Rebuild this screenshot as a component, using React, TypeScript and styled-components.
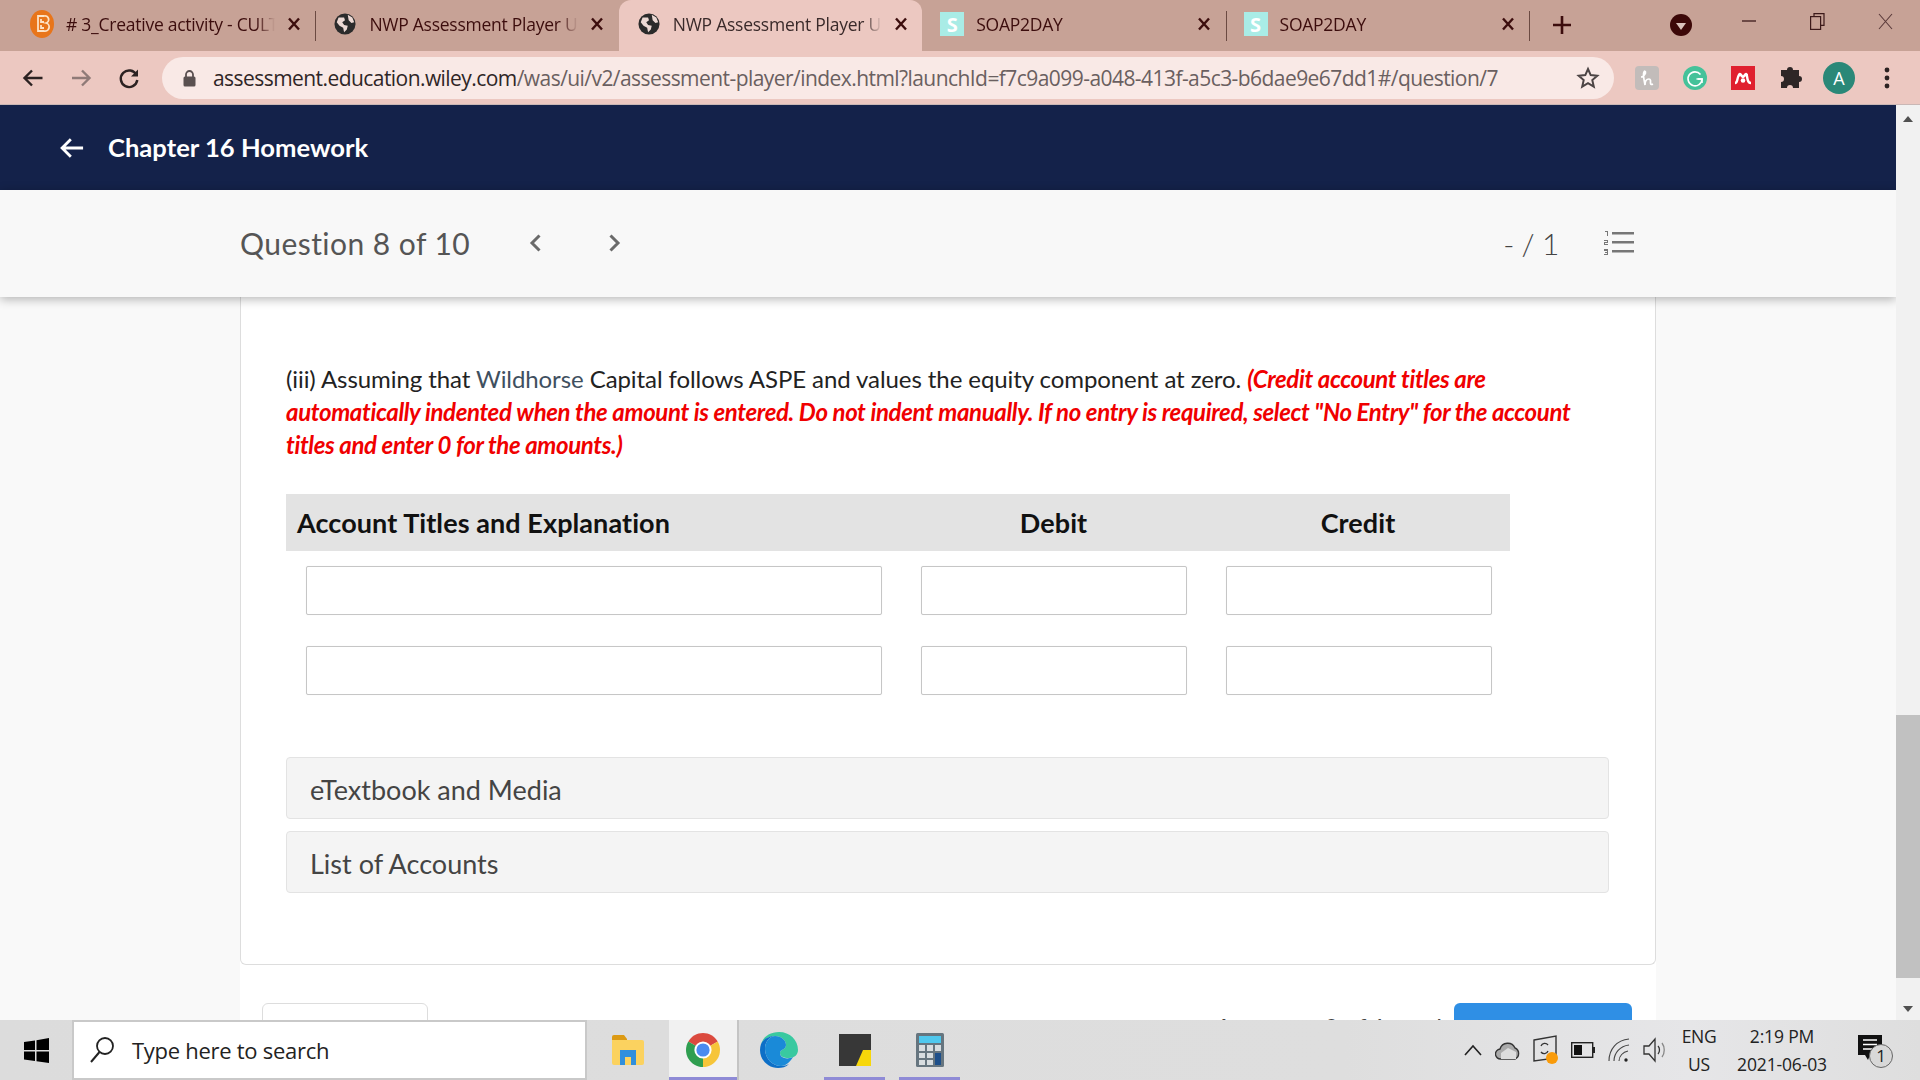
import React from "react";
import styled, { createGlobalStyle } from "styled-components";

const Global = createGlobalStyle`
  html, body { margin: 0; padding: 0; background: #fff; overflow: hidden; }
  * { box-sizing: border-box; }
`;

const Screen = styled.div`
  width: 1920px; height: 1080px; display: flex; flex-direction: column; overflow: hidden;
  font-family: Lato, "Open Sans", sans-serif;
`;

/* ---------- browser chrome ---------- */
const TabStrip = styled.div`
  height: 51px; flex: none; background: #c7a296; display: flex; align-items: stretch; padding-left: 12px; position: relative;
`;
const Tab = styled.div<{ $active?: boolean; $sep?: boolean }>`
  width: 303.4px; flex: none; display: flex; align-items: center; padding: 0 0 3px 18px; position: relative;
  background: ${p => (p.$active ? "#ecc8c1" : "transparent")};
  border-radius: ${p => (p.$active ? "12px 12px 0 0" : "0")};
  color: #3c0d0d;
  &::after {
    content: ""; display: ${p => (p.$sep ? "block" : "none")}; position: absolute; right: -1px; top: 11px; height: 30px; width: 1px; background: #6b4a42;
  }
`;
const FaviconSlot = styled.div`
  width: 24px; height: 24px; flex: none; display: flex; align-items: center; justify-content: center;
`;
const TabTitle = styled.div<{ $active?: boolean }>`
  margin-left: 12px; width: 209px; flex: none; overflow: hidden; white-space: nowrap;
  font: 400 17.5px "Open Sans", sans-serif; letter-spacing: -0.25px;
  color: ${p => (p.$active ? "#3a2a2a" : "#3c0d0d")};
  -webkit-mask-image: linear-gradient(90deg, #000 91%, transparent 100%);
  mask-image: linear-gradient(90deg, #000 91%, transparent 100%);
`;
const TabClose = styled.div`
  width: 16px; margin-left: 11px; flex: none; display: flex; justify-content: center;
`;
const SoapIcon = styled.div`
  width: 24px; height: 24px; background: #a9ece6; color: #fff; font: 700 20px "Open Sans", sans-serif; display: flex; align-items: center; justify-content: center;
`;
const NewTab = styled.div`
  width: 44px; margin-left: 11px; display: flex; align-items: center; justify-content: center; flex: none; padding-bottom: 2px;
`;
const StripSpacer = styled.div`
  flex: 1;
`;
const ProfileMenu = styled.div`
  width: 22px; height: 22px; margin-top: 14px; border-radius: 50%; background: #3c0808; display: flex; align-items: center; justify-content: center; flex: none;
  &::after { content: ""; border-left: 5px solid transparent; border-right: 5px solid transparent; border-top: 7px solid #d9c2bb; margin-top: 2px; }
`;
const WinButtons = styled.div`
  display: flex; width: 215px; margin-left: 13px; flex: none; align-items: flex-start; justify-content: space-between; padding: 13px 27px 0 36px;
`;
const Toolbar = styled.div`
  height: 54px; flex: none; background: #ecc8c1; display: flex; align-items: center; border-bottom: 1px solid #c9b7b5;
`;
const NavIcons = styled.div`
  width: 162px; flex: none; display: flex; align-items: center; gap: 24px; padding-left: 21px;
`;
const Omnibox = styled.div`
  width: 1452px; height: 42px; flex: none; border-radius: 21px; background: #f9e9e6; display: flex; align-items: center; padding: 0 14px 0 20px; position: relative;
`;
const Url = styled.div`
  margin-left: 16px; font: 400 21px "Open Sans", sans-serif; letter-spacing: -0.56px; color: #6a5f60; white-space: nowrap; flex: 1;
  b { font-weight: 400; color: #2f2626; }
`;
const ExtIcons = styled.div`
  flex: none; display: flex; align-items: center; padding-left: 9px;
`;
const ExtSlot = styled.div`
  width: 48px; flex: none; display: flex; align-items: center; justify-content: center;
`;
const Avatar = styled.div`
  width: 32px; height: 32px; background: #2a8878; border-radius: 50%;
  color: #fff; display: flex; align-items: center; justify-content: center; font: 400 18px "Open Sans", sans-serif; flex: none;
`;

/* ---------- page ---------- */
const Viewport = styled.div`
  flex: 1; min-height: 0; display: flex; overflow: hidden;
`;
const Page = styled.div`
  flex: 1; min-width: 0; display: flex; flex-direction: column; background: #f9f9f9; overflow: hidden;
`;
const Scrollbar = styled.div`
  width: 24px; flex: none; background: #f1f1f1; display: flex; flex-direction: column; align-items: stretch; padding-top: 610px; position: relative;
`;
const Thumb = styled.div`
  height: 263px; background: #c1c1c1;
`;
const ScrollArrow = styled.div<{ $down?: boolean }>`
  position: absolute; left: 7px; ${p => (p.$down ? "bottom: 8px;" : "top: 11px;")}
  border-left: 5px solid transparent; border-right: 5px solid transparent;
  ${p => (p.$down ? "border-top: 6px solid #505050;" : "border-bottom: 6px solid #505050;")}
`;
const TopBar = styled.div`
  height: 85px; flex: none; background: #14224a; color: #fff; display: flex; align-items: center; padding-left: 58px; gap: 22px;
`;
const TopTitle = styled.div`
  font: 700 25.6px Lato, sans-serif; padding-bottom: 1px;
`;
const SubBar = styled.div`
  height: 107px; flex: none; background: #f8f8f8; box-shadow: 0 2px 10px rgba(0,0,0,.3); position: relative; z-index: 2;
  display: flex; align-items: center; padding: 0 262px 2px 240px; color: #555;
`;
const QuestionLabel = styled.div`
  font: 400 30px Lato, sans-serif; width: 289px; letter-spacing: .45px; flex: none;
`;
const Chevrons = styled.div`
  display: flex; gap: 64px; align-items: center;
`;
const Score = styled.div`
  margin-left: auto; font: 300 30px Lato, sans-serif; color: #444; margin-right: 45px; letter-spacing: -.4px;
`;
const Column = styled.div`
  margin: 0 240px; background: #fff; flex: 1; min-height: 0; display: flex; flex-direction: column;
`;
const Card = styled.div`
  border: 1px solid #ddd; border-top: none; border-radius: 0 0 6px 6px; height: 668px; flex: none; padding: 0 45px 0 45px;
`;
const Prompt = styled.p`
  margin: 65px 0 0; font: 400 24px/33px Lato, sans-serif; color: #222; letter-spacing: -0.08px; width: 1300px;
`;
const Company = styled.span`
  color: #3f5060;
`;
const Warning = styled.em`
  color: #f00000; font-weight: 700; font-style: italic; letter-spacing: -0.36px;
`;
const JournalTable = styled.div`
  margin-top: 33px; width: 1224px;
`;
const TableHead = styled.div`
  height: 57px; background: #e3e3e3; display: grid; grid-template-columns: 615px 305px 304px; align-items: center;
  font: 700 27px Lato, sans-serif; color: #111; letter-spacing: .08px;
`;
const HeadCell = styled.div<{ $center?: boolean }>`
  text-align: ${p => (p.$center ? "center" : "left")}; padding-left: ${p => (p.$center ? "0" : "11px")};
`;
const TableRow = styled.div`
  display: grid; grid-template-columns: 576px 266px 266px; column-gap: 39px; padding-left: 20px; margin-top: 15px;
  & + & { margin-top: 31px; }
`;
const Field = styled.div`
  height: 49px; border: 1px solid #c6c6c6; border-radius: 2px; background: #fff; box-shadow: 0 0 1px rgba(0,0,0,.1);
`;
const Accordion = styled.div<{ $first?: boolean }>`
  margin-top: ${p => (p.$first ? "62px" : "12px")}; height: 62px; width: 1323px; background: #f4f4f4; border: 1px solid #e3e3e3; border-radius: 4px;
  display: flex; align-items: center; padding: 2px 0 0 23px; font: 400 27px Lato, sans-serif; color: #444;
`;
const Footer = styled.div`
  display: flex; align-items: flex-start; padding: 38px 24px 0 22px; flex: 1; min-height: 0;
`;
const GhostButton = styled.div`
  width: 166px; height: 50px; border: 1px solid #ddd; border-radius: 6px;
`;
const FooterNote = styled.div`
  margin-left: auto; margin-right: 12px; margin-top: 9px; font: 400 24px Lato, sans-serif; color: #444; white-space: nowrap;
`;
const PrimaryButton = styled.div`
  width: 178px; height: 50px; background: #2f8fe5; border-radius: 6px;
`;

/* ---------- taskbar ---------- */
const Taskbar = styled.div`
  height: 60px; flex: none; background: linear-gradient(90deg, #dcdcdc, #dedede 70%, #e6e6e8 88%, #dedede); display: flex; align-items: stretch; position: relative;
`;
const StartSlot = styled.div`
  width: 72px; flex: none; display: flex; align-items: center; justify-content: center;
`;
const SearchBox = styled.div`
  width: 515px; flex: none; background: #fff; border: 2px solid #c9c9c9; display: flex; align-items: center; padding-left: 14px;
  font: 400 22px "Open Sans", sans-serif; color: #222; letter-spacing: -0.28px; gap: 16px;
`;
const AppSlot = styled.div<{ $w: number; $bar?: boolean; $lit?: boolean; $gap?: number }>`
  width: ${p => p.$w}px; flex: none; display: flex; align-items: center; justify-content: center; position: relative;
  margin-left: ${p => p.$gap ?? 0}px;
  background: ${p => (p.$lit ? "#f1f1f1" : "transparent")};
  ${p => (p.$lit ? "border-right: 2px solid #c4c4c4;" : "")}
  &::after {
    content: ""; display: ${p => (p.$bar ? "block" : "none")}; position: absolute; left: 0; right: 0; bottom: 0; height: 3px; background: #8f8bd6;
  }
`;
const Tray = styled.div`
  margin-left: auto; display: flex; align-items: center; height: 100%; padding-right: 36px;
`;
const TrayIcons = styled.div`
  display: flex; align-items: center; gap: 12px; margin-right: 9px;
`;
const Lang = styled.div`
  font: 400 17.5px/28px "Open Sans", sans-serif; color: #222; text-align: center; width: 46px; letter-spacing: -0.3px;
`;
const Clock = styled.div`
  font: 400 17.5px/28px "Open Sans", sans-serif; color: #222; text-align: center; margin-left: 10px; width: 100px; letter-spacing: -0.15px; white-space: nowrap;
`;
const Notify = styled.div`
  margin-left: 26px; position: relative; width: 26px; height: 30px;
`;
const NotifyBadge = styled.div`
  position: absolute; left: 11px; top: 9px; width: 24px; height: 24px; border-radius: 50%; border: 1.5px solid #666; background: #d8d8d8;
  font: 400 17px/21px "Open Sans", sans-serif; text-align: center; color: #222;
`;

/* ---------- drawings ---------- */
const Close = () => (
  <svg width="14" height="14" viewBox="0 0 14 14"><path d="M2 1.500l10 11M12 1.500L2 12.500" stroke="#3c0d0d" strokeWidth="2.4" /></svg>
);
const Globe = () => (
  <svg width="22" height="22" viewBox="0 0 24 24">
    <circle cx="12" cy="12" r="11.500" fill="#2b2b2b" />
    <path d="M5 5l6 0 1 3-3 2 2 3 4 1-1 4-3 3-1-5-4-2-3-4zM15 2l5 3 2 5-3 1-3-3z" fill="#ecd9d4" />
  </svg>
);
const BrightIcon = () => (
  <svg width="24" height="28" viewBox="0 0 24 28">
    <ellipse cx="12" cy="14" rx="12" ry="14" fill="#e8751a" />
    <path d="M8 6h6a3.500 3.500 0 0 1 2 7 4 4 0 0 1-2 8H8zM11 9v3h3M11 15v3h3" fill="none" stroke="#fde3c6" strokeWidth="1.8" />
  </svg>
);
const Back = ({ c = "#2c2222", s = 24 }: { c?: string; s?: number }) => (
  <svg width={s} height={s} viewBox="0 0 24 24"><path d="M21.500 12H3.500M11 4.500L3.500 12l7.500 7.500" fill="none" stroke={c} strokeWidth="2.4" /></svg>
);
const Forward = () => (
  <svg width="24" height="24" viewBox="0 0 24 24"><path d="M3 12h17M13 4.500l7.500 7.500-7.500 7.500" fill="none" stroke="#8f7a77" strokeWidth="2.4" /></svg>
);
const Reload = () => (
  <svg width="24" height="24" viewBox="0 0 24 24"><path d="M19.500 9A8.300 8.300 0 1 0 20.300 14" fill="none" stroke="#2c2222" strokeWidth="2.4" /><path d="M21 3.500V10.500H14z" fill="#2c2222" /></svg>
);
const Lock = () => (
  <svg width="15" height="18" viewBox="0 0 15 18"><path d="M4 8V5.500a3.500 3.500 0 0 1 7 0V8" fill="none" stroke="#5a5050" strokeWidth="1.8" /><rect x="1.500" y="7.500" width="12" height="10" rx="1.500" fill="#5a5050" /></svg>
);
const Star = () => (
  <svg width="24" height="24" viewBox="0 0 24 24" style={{ position: "absolute", right: 14, top: 9 }}>
    <path d="M12 3l2.700 6.100 6.600.6-5 4.400 1.500 6.500L12 17.200 6.200 20.600l1.500-6.500-5-4.400 6.600-.6z" fill="none" stroke="#4c4444" strokeWidth="2" />
  </svg>
);
const Honey = () => (
  <svg width="24" height="24" viewBox="0 0 24 24">
    <rect width="24" height="24" rx="4" fill="#c2bcba" />
    <path d="M6 11c2 0 5-3 4.500-5S8 6 8.500 10 10 19 10 19c0-4 2-6 4-6s1.500 3 1.500 4 .5 2 2.500 1" fill="none" stroke="#fff" strokeWidth="1.7" />
  </svg>
);
const GrammarlyIcon = () => (
  <svg width="24" height="24" viewBox="0 0 24 24">
    <circle cx="12" cy="12" r="12" fill="#45c29a" />
    <path d="M17.500 8.500A7 7 0 1 0 19 13h-5.500" fill="none" stroke="#fff" strokeWidth="1.600" />
    <path d="M15 13h4v4" fill="none" stroke="#fff" strokeWidth="1.600" />
  </svg>
);
const Mendeley = () => (
  <svg width="24" height="24" viewBox="0 0 24 24">
    <rect width="24" height="24" fill="#e0202f" />
    <path d="M4 17c2 0 2-2 2.500-4S8 8 9 8s2 3 3 3 2-3 3-3 1 3 1.500 5 .5 4 3.500 4" fill="none" stroke="#fff" strokeWidth="2.400" />
    <circle cx="12" cy="14.500" r="2.300" fill="#fff" /><circle cx="8.500" cy="9" r="1.600" fill="#fff" /><circle cx="15.500" cy="9" r="1.600" fill="#fff" />
  </svg>
);
const Puzzle = () => (
  <svg width="24" height="26" viewBox="0 0 24 26"><path d="M8 5a3 3 0 0 1 6 0h6v6a3 3 0 0 1 0 6v6h-6a3 3 0 0 0-6 0H2v-6a3 3 0 0 0 0-6V5z" fill="#2e2626" /></svg>
);
const Dots = () => (
  <svg width="8" height="24" viewBox="0 0 8 24"><circle cx="4" cy="4" r="2.400" fill="#2c2222" /><circle cx="4" cy="12" r="2.400" fill="#2c2222" /><circle cx="4" cy="20" r="2.400" fill="#2c2222" /></svg>
);
const ListIcon = () => (
  <svg width="30" height="26" viewBox="0 0 30 26" fill="#777">
    <rect x="8" y="2" width="22" height="2.500" /><rect x="8" y="11" width="22" height="2.500" /><rect x="8" y="20" width="22" height="2.500" />
    <path d="M1 1h3v5H3V2H1zM0 10h4v3H1v1h3v1H0v-3h3v-1H0zM0 19h4v6H0v-1h3v-1H1v-1h2v-1H0z" />
  </svg>
);
const Chevron = ({ d }: { d: string }) => (
  <svg width="14" height="20" viewBox="0 0 14 20"><path d={d} fill="none" stroke="#6a6a6a" strokeWidth="3" /></svg>
);
const WindowsLogo = () => (
  <svg width="25" height="25" viewBox="0 0 25 25" fill="#000"><path d="M0 4l11-1.600V12H0zM12.500 2.200L25 0v12H12.500zM0 13.500h11V23L0 21.400zM12.500 13.500H25V25l-12.500-1.800z" /></svg>
);
const SearchGlass = () => (
  <svg width="28" height="28" viewBox="0 0 28 28"><circle cx="17" cy="10" r="8" fill="none" stroke="#222" strokeWidth="1.8" /><path d="M11.500 16L3 26" stroke="#222" strokeWidth="2" /></svg>
);
const Explorer = () => (
  <svg width="34" height="30" viewBox="0 0 34 30">
    <path d="M1 2a2 2 0 0 1 2-2h10l3 4v4H1z" fill="#dc9a14" />
    <path d="M1 5h30a2 2 0 0 1 2 2v21a2 2 0 0 1-2 2H3a2 2 0 0 1-2-2z" fill="#fbd25f" />
    <path d="M9 15h16v15h-5v-8h-6v8H9z" fill="#2f8fdd" />
  </svg>
);
const Chrome = () => (
  <svg width="34" height="34" viewBox="0 0 34 34">
    <path d="M17 17L2.300 8.500A17 17 0 0 1 31.700 8.500z" fill="#db4a3e" />
    <path d="M17 17L31.700 8.500A17 17 0 0 1 17 34z" fill="#f6c53a" />
    <path d="M17 17V34A17 17 0 0 1 2.300 8.500z" fill="#2f9e50" />
    <circle cx="17" cy="17" r="8.600" fill="#fff" /><circle cx="17" cy="17" r="6.600" fill="#4b8bf0" />
  </svg>
);
const Edge = () => (
  <svg width="38" height="36" viewBox="0 0 38 36">
    <path d="M19 0c11 0 19 8 19 18 0 5-4 8-9 8-6 0-9-2-9-5 0-4 6-3 6-8 0-5-5-9-11-9C9 4 4 7 1 12 3 5 10 0 19 0z" fill="#39c9a0" />
    <path d="M1 12C4 6 10 4 15 4c-7 1-10 7-10 13 0 9 7 17 16 17 3 0 6-1 8-2-3 3-7 4-11 4C8 36 0 28 0 18c0-2 .4-4 1-6z" fill="#0d6fc7" />
    <path d="M15 4c6 0 11 4 11 9 0 5-6 4-6 8 0 5 7 7 13 4-2 4-7 9-12 9-9 0-16-8-16-17C5 11 8 5 15 4z" fill="#1a8ad8" />
  </svg>
);
const Sticky = () => (
  <svg width="32" height="32" viewBox="0 0 32 32"><rect width="32" height="32" fill="#373737" /><path d="M32 16v16H17l7-16z" fill="#f7d70a" /></svg>
);
const Calc = () => (
  <svg width="28" height="34" viewBox="0 0 28 34">
    <rect width="28" height="34" rx="1.500" fill="#66757f" />
    <rect x="3" y="3" width="22" height="7" fill="#4fc8ee" />
    <g fill="#d8dde0"><rect x="3" y="12" width="6" height="6" /><rect x="11" y="12" width="6" height="6" /><rect x="19" y="12" width="6" height="6" /><rect x="3" y="20" width="6" height="5" /><rect x="11" y="20" width="6" height="5" /><rect x="3" y="27" width="6" height="5" /><rect x="11" y="27" width="6" height="5" /></g>
    <rect x="19" y="20" width="6" height="12" fill="#1d4f8a" />
  </svg>
);
const TrayCaret = () => (
  <svg width="20" height="12" viewBox="0 0 20 12"><path d="M2 11l8-9 8 9" fill="none" stroke="#222" strokeWidth="1.6" /></svg>
);
const Cloud = () => (
  <svg width="26" height="20" viewBox="0 0 26 20"><path d="M6 19a5 5 0 0 1-1-10 8 8 0 0 1 15-1 6 6 0 0 1 0 11z" fill="#aaa" stroke="#333" strokeWidth="1.4" /><path d="M6 13l7-5 8 4v7H6z" fill="#ddd" /></svg>
);
const Sync = () => (
  <svg width="26" height="30" viewBox="0 0 26 30">
    <path d="M1 5L23 1v22L1 26z" fill="none" stroke="#333" strokeWidth="1.4" />
    <path d="M8 11a4 4 0 0 1 7-1M15 16a4 4 0 0 1-7 1" fill="none" stroke="#333" strokeWidth="1.3" />
    <circle cx="19" cy="23" r="6" fill="#f99b0a" />
  </svg>
);
const Battery = () => (
  <svg width="24" height="16" viewBox="0 0 24 16"><rect x=".7" y=".7" width="21" height="14.600" fill="none" stroke="#222" strokeWidth="1.4" /><rect x="3" y="3" width="8" height="10" fill="#111" /><rect x="22" y="5" width="2" height="6" fill="#222" /></svg>
);
const Wifi = () => (
  <svg width="24" height="26" viewBox="0 0 24 26" fill="none" stroke="#444" strokeWidth="1.1">
    <path d="M2 24C2 12 10 3 22 2M7 24c0-8 6-15 15-16M12 24c0-5 4-9 9-10" /><circle cx="19" cy="23" r="1.700" fill="#222" stroke="none" />
  </svg>
);
const Speaker = () => (
  <svg width="24" height="28" viewBox="0 0 24 28" fill="none" stroke="#333" strokeWidth="1.3">
    <path d="M1 10h5l6-7v22l-6-7H1zM15 10c2 2 2 6 0 8" /><path d="M19 7c3 4 3 10 0 14" stroke="#888" />
  </svg>
);
const NotifyIcon = () => (
  <svg width="24" height="30" viewBox="0 0 24 30"><path d="M0 0h24v20H12l-2 5-3-5H0z" fill="#111" /><path d="M5 5h14M5 9.500h14M5 14h14" stroke="#fff" strokeWidth="1.4" /></svg>
);
const WinMin = () => (<svg width="16" height="16" viewBox="0 0 16 16"><path d="M1 8h14" stroke="#3c1a1a" strokeWidth="1.3" /></svg>);
const WinRestore = () => (
  <svg width="15" height="17" viewBox="0 0 15 17" fill="none" stroke="#3c1a1a" strokeWidth="1.2"><rect x=".6" y="3.600" width="10" height="12.800" /><path d="M4 3.600V.6h10v11.800h-3.400" /></svg>
);
const WinClose = () => (<svg width="15" height="17" viewBox="0 0 15 17"><path d="M1 1l13 15M14 1L1 16" stroke="#5a3a3a" strokeWidth="1.1" /></svg>);
const Plus = () => (<svg width="20" height="20" viewBox="0 0 20 20"><path d="M10 1v18M1 10h18" stroke="#3c0d0d" strokeWidth="2.6" /></svg>);

const tabs = [
  { title: "# 3_Creative activity - CULT 1100", icon: <BrightIcon />, sep: true },
  { title: "NWP Assessment Player UI Application", icon: <Globe /> },
  { title: "NWP Assessment Player UI Application", icon: <Globe />, active: true },
  { title: "SOAP2DAY", icon: <SoapIcon>S</SoapIcon>, sep: true },
  { title: "SOAP2DAY", icon: <SoapIcon>S</SoapIcon>, sep: true },
];

export default function App() {
  return (
    <Screen>
      <Global />
      <TabStrip>
        {tabs.map((t, i) => (
          <Tab key={i} $active={t.active} $sep={t.sep}>
            <FaviconSlot>{t.icon}</FaviconSlot>
            <TabTitle $active={t.active}>{t.title}</TabTitle>
            <TabClose><Close /></TabClose>
          </Tab>
        ))}
        <NewTab><Plus /></NewTab>
        <StripSpacer />
        <ProfileMenu />
        <WinButtons><WinMin /><WinRestore /><WinClose /></WinButtons>
      </TabStrip>
      <Toolbar>
        <NavIcons><Back /><Forward /><Reload /></NavIcons>
        <Omnibox>
          <Lock />
          <Url><b>assessment.education.wiley.com</b>/was/ui/v2/assessment-player/index.html?launchId=f7c9a099-a048-413f-a5c3-b6dae9e67dd1#/question/7</Url>
          <Star />
        </Omnibox>
        <ExtIcons>
          <ExtSlot><Honey /></ExtSlot>
          <ExtSlot><GrammarlyIcon /></ExtSlot>
          <ExtSlot><Mendeley /></ExtSlot>
          <ExtSlot><Puzzle /></ExtSlot>
          <ExtSlot><Avatar>A</Avatar></ExtSlot>
          <ExtSlot><Dots /></ExtSlot>
        </ExtIcons>
      </Toolbar>
      <Viewport>
        <Page>
          <TopBar>
            <Back c="#fff" s={28} />
            <TopTitle>Chapter 16 Homework</TopTitle>
          </TopBar>
          <SubBar>
            <QuestionLabel>Question 8 of 10</QuestionLabel>
            <Chevrons>
              <Chevron d="M10.500 2.500L3 10l7.500 7.500" />
              <Chevron d="M3.500 2.500L11 10l-7.500 7.500" />
            </Chevrons>
            <Score>- / 1</Score>
            <ListIcon />
          </SubBar>
          <Column>
            <Card>
              <Prompt>
                (iii) Assuming that <Company>Wildhorse</Company> Capital follows ASPE and values the equity component at zero.{" "}
                <Warning>(Credit account titles are automatically indented when the amount is entered. Do not indent manually. If no entry is required, select "No Entry" for the account titles and enter 0 for the amounts.)</Warning>
              </Prompt>
              <JournalTable>
                <TableHead>
                  <HeadCell>Account Titles and Explanation</HeadCell>
                  <HeadCell $center>Debit</HeadCell>
                  <HeadCell $center>Credit</HeadCell>
                </TableHead>
                <TableRow><Field /><Field /><Field /></TableRow>
                <TableRow><Field /><Field /><Field /></TableRow>
              </JournalTable>
              <Accordion $first>eTextbook and Media</Accordion>
              <Accordion>List of Accounts</Accordion>
            </Card>
            <Footer>
              <GhostButton />
              <FooterNote>Attempts: 0 of 1 used</FooterNote>
              <PrimaryButton />
            </Footer>
          </Column>
        </Page>
        <Scrollbar>
          <ScrollArrow />
          <Thumb />
          <ScrollArrow $down />
        </Scrollbar>
      </Viewport>
      <Taskbar>
        <StartSlot><WindowsLogo /></StartSlot>
        <SearchBox><SearchGlass />Type here to search</SearchBox>
        <AppSlot $w={82}><Explorer /></AppSlot>
        <AppSlot $w={70} $lit $bar><Chrome /></AppSlot>
        <AppSlot $w={80}><Edge /></AppSlot>
        <AppSlot $w={61} $bar $gap={5}><Sticky /></AppSlot>
        <AppSlot $w={61} $bar $gap={14}><Calc /></AppSlot>
        <Tray>
          <TrayIcons><TrayCaret /><Cloud /><Sync /><Battery /><Wifi /><Speaker /></TrayIcons>
          <Lang>ENG<br />US</Lang>
          <Clock>2:19 PM<br />2021-06-03</Clock>
          <Notify><NotifyIcon /><NotifyBadge>1</NotifyBadge></Notify>
        </Tray>
      </Taskbar>
    </Screen>
  );
}
